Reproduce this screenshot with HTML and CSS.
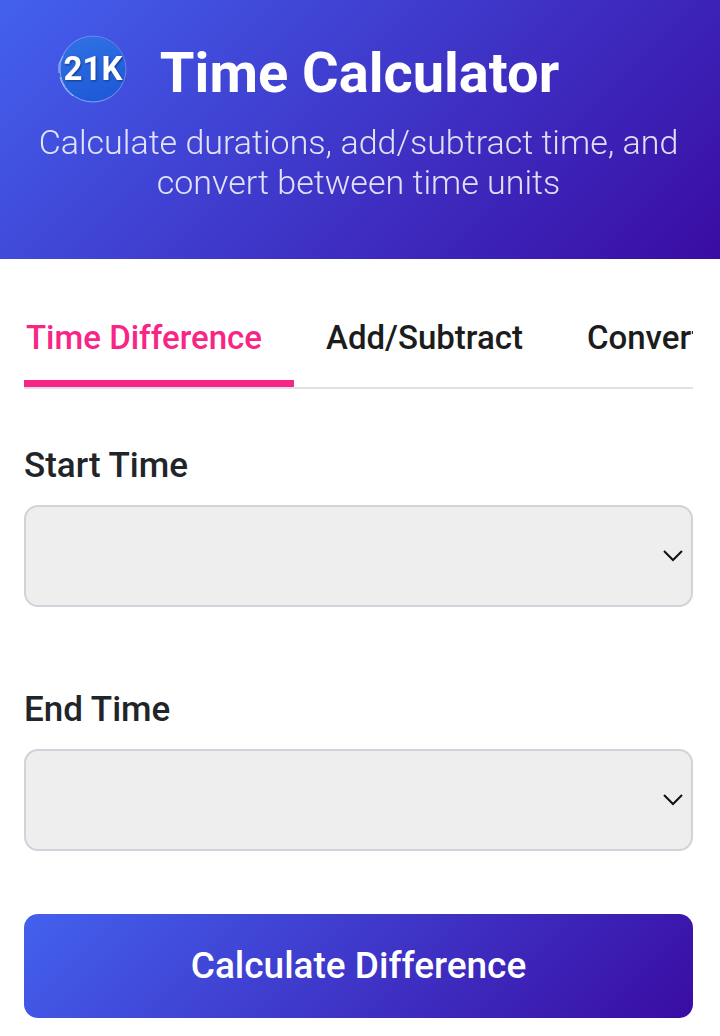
FILE: index.html
```html
<!DOCTYPE html>
<html lang="en">
<head>
<meta charset="utf-8">
<meta name="viewport" content="width=device-width, initial-scale=1">
<title>Time Calculator</title>
<link rel="stylesheet" href="styles.css">
</head>
<body>
<header class="hero">
  <div class="brand">
    <svg class="logo" viewBox="0 0 72 72" role="img" aria-label="21K">
      <defs>
        <linearGradient id="disc" x1="0" y1="0" x2="0.3" y2="1">
          <stop offset="0" stop-color="#3073e6"/>
          <stop offset="1" stop-color="#1f5bd8"/>
        </linearGradient>
        <linearGradient id="rim" x1="1" y1="0" x2="0" y2="1">
          <stop offset="0" stop-color="#6a6ee6"/>
          <stop offset="1" stop-color="#8db4f5"/>
        </linearGradient>
      </defs>
      <circle cx="37" cy="32" r="33" fill="url(#disc)" stroke="url(#rim)"/>
      <path d="M3 36V27L7 19M4 40Q7 52 17 59" fill="none" stroke="#a9c4fa"/>
      <text class="logo-text" x="37" y="43" text-anchor="middle">21K</text>
    </svg>
    <h1 class="title">Time Calculator</h1>
  </div>
  <p class="subtitle">Calculate durations, add/subtract time, and convert between time units</p>
</header>
<main class="content">
  <nav class="tabs">
    <button class="tab tab-active" type="button">Time Difference</button>
    <button class="tab" type="button">Add/Subtract</button>
    <button class="tab" type="button">Convert</button>
  </nav>
  <form class="form">
    <div class="field">
      <label class="label" for="start">Start Time</label>
      <div class="select-wrap">
        <select class="select" id="start"><option></option></select>
        <svg class="chevron" viewBox="0 0 22 14" aria-hidden="true"><path d="M2 2L11 11L20 2"/></svg>
      </div>
    </div>
    <div class="field">
      <label class="label" for="end">End Time</label>
      <div class="select-wrap">
        <select class="select" id="end"><option></option></select>
        <svg class="chevron" viewBox="0 0 22 14" aria-hidden="true"><path d="M2 2L11 11L20 2"/></svg>
      </div>
    </div>
    <button class="submit" type="button">Calculate Difference</button>
  </form>
</main>
</body>
</html>
```
FILE: styles.css
```css
* {
  box-sizing: border-box;
}

body {
  margin: 0;
  background: #fff;
  color: #212529;
  font-family: Roboto, sans-serif;
}

.hero {
  padding: 33px 27px 57px 24px;
  background: linear-gradient(135deg, #4361ee, #3a0ca3);
  color: #fff;
  text-align: center;
}

.brand {
  display: flex;
  align-items: center;
  justify-content: center;
  gap: 32px;
  padding-right: 102px;
}

.logo {
  flex: none;
  width: 72px;
  height: 72px;
  overflow: visible;
}

.logo-text {
  fill: #fff;
  font-size: 33px;
  font-weight: 700;
  filter: drop-shadow(1px 1px 1px #123a86);
}

.title {
  margin: 0;
  font-size: 56px;
  font-weight: 700;
  line-height: 80px;
}

.subtitle {
  margin: 9px 0 0;
  font-size: 34px;
  font-weight: 300;
  line-height: 40px;
  opacity: 0.85;
}

.content {
  padding: 41px 27px 18px 24px;
}

.tabs {
  display: flex;
  overflow: hidden;
  border-bottom: 2px solid #dee2e6;
}

.tab {
  flex: none;
  padding: 18px 32px 22px;
  border: 0;
  border-bottom: 7px solid transparent;
  background: none;
  color: #1c1c1c;
  font: 500 33px/40px Roboto, sans-serif;
}

.tab:first-child {
  padding-left: 2px;
}

.tab-active {
  border-bottom-color: #f72585;
  color: #f72585;
}

.form {
  padding-top: 57px;
}

.label {
  display: block;
  margin-bottom: 19px;
  font-size: 35px;
  font-weight: 500;
  line-height: 40px;
}

.field {
  margin-bottom: 83px;
}

.field:nth-of-type(2) {
  margin-bottom: 63px;
}

.select-wrap {
  position: relative;
}

.select {
  display: block;
  width: 100%;
  height: 102px;
  appearance: none;
  border: 2px solid #ced4da;
  border-radius: 14px;
  background: #eee;
  font-size: 34px;
}

.chevron {
  position: absolute;
  top: 44px;
  right: 9px;
  width: 22px;
  height: 14px;
  fill: none;
  stroke: #111;
  stroke-width: 2;
  pointer-events: none;
}

.submit {
  display: block;
  width: 100%;
  padding: 32px;
  border: 0;
  border-radius: 14px;
  background: linear-gradient(135deg, #4361ee, #3a0ca3);
  color: #fff;
  font: 500 37px/40px Roboto, sans-serif;
}
```
